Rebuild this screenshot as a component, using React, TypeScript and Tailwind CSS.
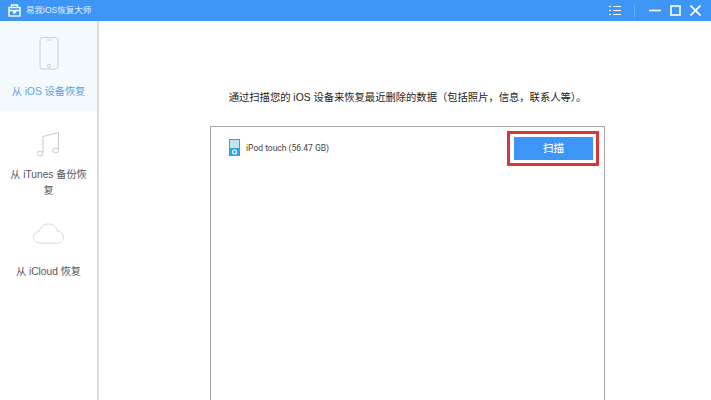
import React from 'react';

const FONT = "font-['Liberation_Sans','Noto_Sans_CJK_SC',sans-serif]";

function AppLogo() {
  return (
    <svg width="13" height="13" viewBox="0 0 13 13" fill="none" stroke="white" strokeWidth="1.4">
      <rect x="1" y="3.5" width="11" height="8.5" />
      <path d="M3.5 3.5V1h6v2.5M1 6.5h11M6.5 6v4M4.7 8h3.6" />
    </svg>
  );
}

function PhoneIcon() {
  return (
    <svg width="20" height="33" viewBox="0 0 20 33" fill="none" stroke="#c9ced3" strokeWidth="1">
      <rect x="1" y="0.5" width="18" height="31.5" rx="2.5" />
      <path d="M7.5 3h5" />
      <circle cx="10" cy="28.8" r="1.6" />
    </svg>
  );
}

function NoteIcon() {
  return (
    <svg width="24" height="25" viewBox="0 0 24 25" fill="none" stroke="#c9c9c9" strokeWidth="1">
      <path d="M6 20.5V4.5L21.5 .5V17.5" />
      <ellipse cx="3.2" cy="21.5" rx="2.8" ry="2.4" />
      <ellipse cx="18.6" cy="18.5" rx="2.8" ry="2.4" />
    </svg>
  );
}

function CloudIcon() {
  return (
    <svg width="31" height="21" viewBox="0 0 32 21" fill="none" stroke="#d6d6d6" strokeWidth="1">
      <path d="M8 20.5C3.5 20.5 .5 17.8 .5 14.3C.5 11 3 8.6 6.3 8.5C7.5 3.7 11.5 .6 16 .6C20.6 .6 24.2 3.6 25.3 8C28.8 8.5 31.5 11 31.5 14.3C31.5 17.8 28.6 20.5 24.5 20.5Z" />
    </svg>
  );
}

function IpodIcon() {
  return (
    <svg width="11" height="17" viewBox="0 0 11 17">
      <rect width="11" height="17" fill="#2fa3e6" />
      <rect x="1" y="1" width="9" height="8" fill="#bfe6ee" />
      <circle cx="5.5" cy="13" r="2" fill="none" stroke="white" strokeWidth="1.2" />
    </svg>
  );
}

interface SideItemProps {
  icon: React.ReactNode;
  label: string;
  active?: boolean;
  className: string;
  labelClass: string;
}

function SideItem({ icon, label, active, className, labelClass }: SideItemProps) {
  return (
    <div className={`flex flex-col items-center px-[8px] ${active ? 'bg-[#f4f9fd]' : ''} ${className}`}>
      <div className="flex h-[34px] items-end justify-center">{icon}</div>
      <div className={`text-center text-[10.2px] leading-[16px] ${active ? 'text-[#5f9fdc]' : 'text-[#555555]'} ${labelClass}`}>{label}</div>
    </div>
  );
}

export default function App() {
  return (
    <div className={`flex h-[400px] w-[711px] flex-col overflow-hidden bg-white ${FONT}`}>
      <header className="flex h-[21px] shrink-0 items-center bg-[#3d96f5] pl-[8px] text-white">
        <AppLogo />
        <span className="ml-[5px] text-[8.5px] text-[#e3f0fe]">易我iOS恢复大师</span>
        <div className="ml-auto flex items-center">
          <svg width="12" height="11" viewBox="0 0 12 11" stroke="white" strokeWidth="1">
            <path d="M0 1.5h2M4 1.5h8M0 5.5h2M4 5.5h8M0 9.5h2M4 9.5h8" />
          </svg>
          <div className="ml-[13px] h-[14px] w-px bg-[#69aef7]" />
          <svg className="ml-[14px]" width="12" height="11" viewBox="0 0 12 11" stroke="white" strokeWidth="1.6">
            <path d="M0 5.5h12" />
          </svg>
          <svg className="ml-[9px]" width="11" height="11" viewBox="0 0 11 11" fill="none" stroke="white" strokeWidth="1.6">
            <rect x="1" y="1" width="9" height="9" />
          </svg>
          <svg className="ml-[9px] mr-[10px]" width="11" height="11" viewBox="0 0 11 11" stroke="white" strokeWidth="1.6">
            <path d="M.5 .5l10 10M10.5 .5l-10 10" />
          </svg>
        </div>
      </header>

      <div className="flex min-h-0 flex-1">
        <aside className="w-[99px] shrink-0 border-r-2 border-[#dcdcdc]">
          <SideItem active icon={<PhoneIcon />} label="从 iOS 设备恢复" className="h-[90px] pt-[15px]" labelClass="mt-[14px]" />
          <SideItem icon={<NoteIcon />} label="从 iTunes 备份恢复" className="h-[99px] pt-[12px]" labelClass="mt-[10px]" />
          <SideItem icon={<CloudIcon />} label="从 iCloud 恢复" className="" labelClass="mt-[20px]" />
        </aside>

        <main className="flex min-w-0 flex-1 flex-col pl-[111px] pr-[106px]">
          <p className="mt-[70px] whitespace-nowrap text-center text-[10.3px] leading-[14px] text-[#222222]">
            通过扫描您的 iOS 设备来恢复最近删除的数据（包括照片，信息，联系人等）。
          </p>
          <section className="mt-[21px] flex-1 border border-b-0 border-[#a6a6a6]">
            <div className="flex items-start justify-between pl-[18px] pr-[5px] pt-[4px]">
              <div className="flex items-center pt-[8px]">
                <IpodIcon />
                <span className="ml-[6px] mt-[1px] font-['Roboto','Noto_Sans_CJK_SC',sans-serif] text-[8.5px] text-[#444444]">iPod touch (56.47 GB)</span>
              </div>
              <div className="border-[3px] border-[#d9363a] py-[3px] pl-[4px] pr-[3px]">
                <button className="block h-[23px] w-[79px] bg-[#3d96f5] text-[10.5px] font-medium text-white">扫描</button>
              </div>
            </div>
          </section>
        </main>
      </div>
    </div>
  );
}
